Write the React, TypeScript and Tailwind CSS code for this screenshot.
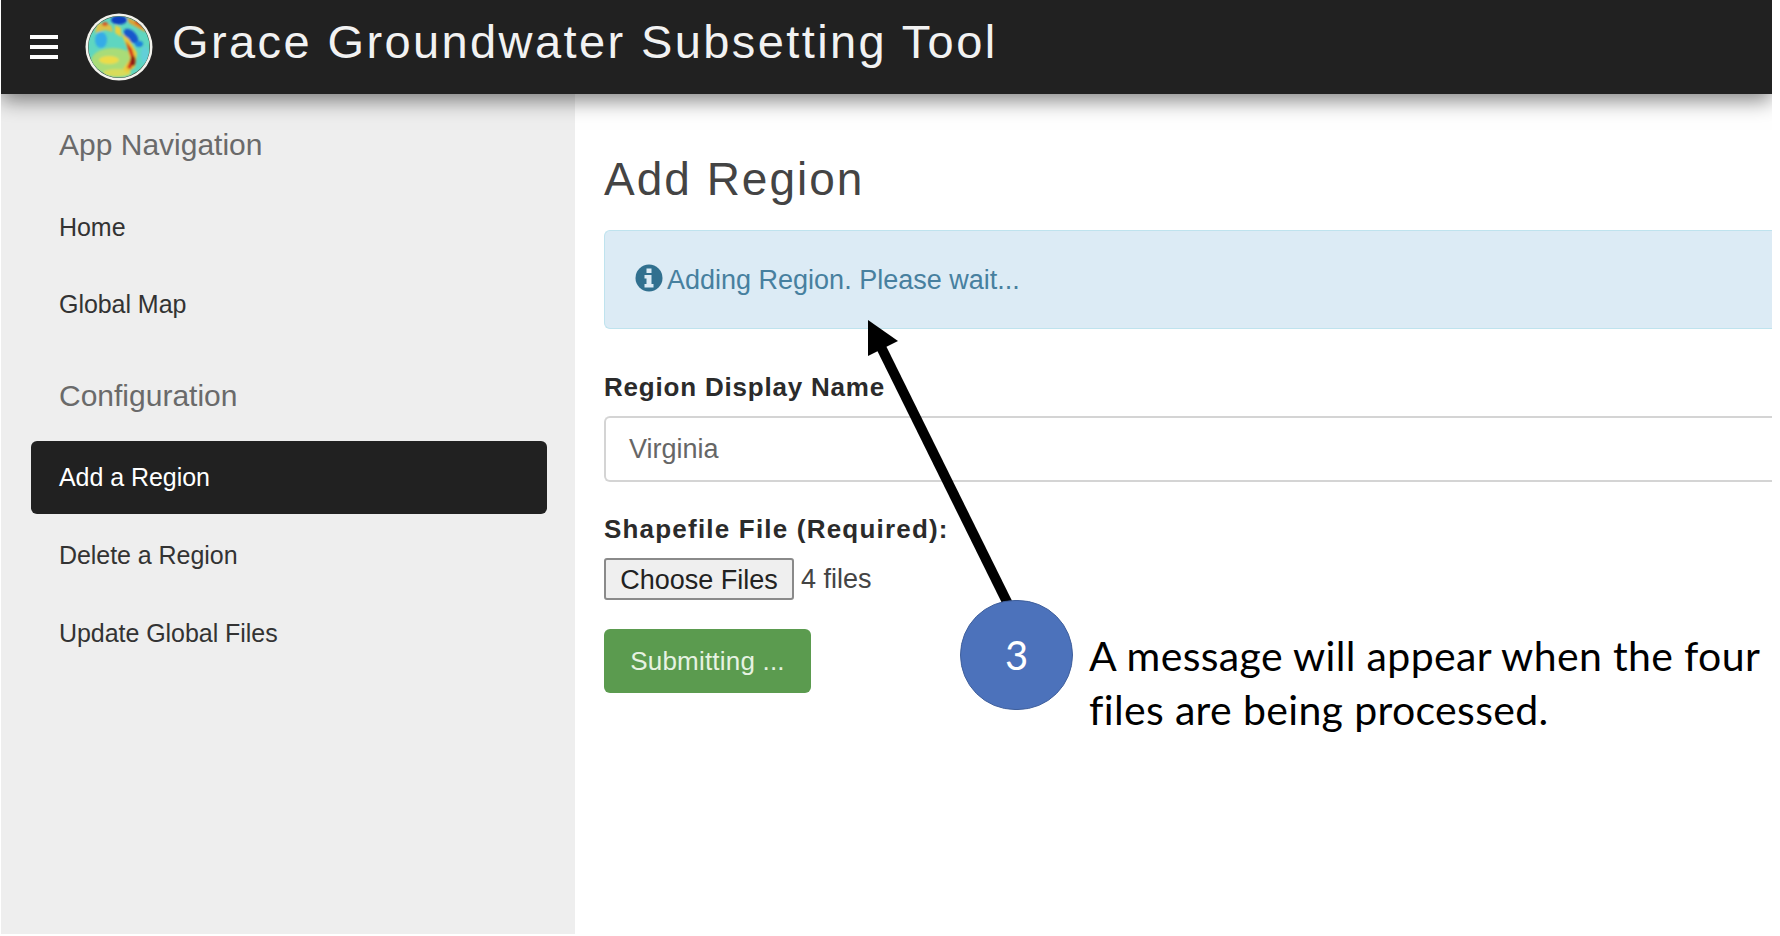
const navLink = "block px-[28px] text-[25px] leading-[36px] text-[#333] tracking-[-0.05px]"
const sectionTitle = "px-[28px] text-[30px] leading-[40px] text-[#6a6a6a]"

function Globe() {
  return (
    <svg viewBox="0 0 68 68" className="w-[68px] h-[68px] shrink-0">
      <defs>
        <clipPath id="earth">
          <circle cx="34" cy="34" r="30.5" />
        </clipPath>
        <filter id="soft">
          <feGaussianBlur stdDeviation="1" />
        </filter>
      </defs>
      <circle cx="34" cy="34" r="33.5" fill="#f2f2ec" />
      <circle cx="34" cy="34" r="31" fill="#3a4a3a" />
      <circle cx="34" cy="34" r="30.5" fill="#5fd6c0" />
      <g clipPath="url(#earth)">
        <g filter="url(#soft)">
          <ellipse cx="28" cy="48" rx="22" ry="13" fill="#a9dc78" />
          <ellipse cx="24" cy="47" rx="10" ry="4" fill="#ecdc4a" />
          <ellipse cx="32" cy="60" rx="14" ry="4" fill="#d8dc5a" />
          <ellipse cx="16" cy="27" rx="6" ry="8" fill="#35ace8" />
          <ellipse cx="34" cy="7" rx="8" ry="4.5" fill="#1040c0" />
          <ellipse cx="46" cy="23" rx="9" ry="5" transform="rotate(45 46 23)" fill="#1558cc" />
          <ellipse cx="54" cy="31" rx="4" ry="3" fill="#1a80e0" />
          <path d="M12 10 L26 12 L28 19 L20 17 L10 20 Z" fill="#dcc24a" />
          <path d="M42 4 L62 14 L60 19 L44 10 Z" fill="#e0a030" />
          <path d="M30 12 L36 15 L36 24 L30 20 Z" fill="#e8d040" />
          <path d="M36 20 L44 26 L52 40 L50 54 L42 60 L38 56 L45 46 L42 34 Z" fill="#eccb3a" />
          <path d="M41 28 L47 36 L50 46 L46 56 L42 55 L46 45 L43 36 Z" fill="#d2321e" />
          <ellipse cx="48" cy="48" rx="2.5" ry="5" fill="#8a1a14" />
          <path d="M50 6 L60 12 L58 15 L50 10 Z" fill="#cf4a22" />
          <ellipse cx="20" cy="11" rx="3" ry="2" fill="#d65a28" />
          <ellipse cx="60" cy="42" rx="4" ry="9" fill="#62cfd8" />
        </g>
      </g>
    </svg>
  )
}

function InfoIcon() {
  return (
    <svg viewBox="0 0 28 28" className="w-[28px] h-[28px] shrink-0 -mt-[3px]">
      <circle cx="14" cy="14" r="13.5" fill="#31708f" />
      <rect x="11.5" y="4.5" width="5" height="4.5" fill="#dcebf5" />
      <path d="M9.5 11h7v9h2v3.5h-9V20h2v-5.5h-2z" fill="#dcebf5" />
    </svg>
  )
}

export default function App() {
  return (
    <div className="relative w-[1780px] h-[936px] bg-white overflow-hidden font-['Liberation_Sans',Arial,sans-serif]">
      <div className="ml-[1px] w-[1771px] h-[934px] flex flex-col overflow-hidden">
        <header className="relative z-10 h-[94px] shrink-0 bg-[#212121] flex items-center pl-[29px] shadow-[0_6px_20px_rgba(0,0,0,0.5)]">
          <div className="flex flex-col gap-[6px] w-[28px]">
            <span className="h-[4px] bg-white" />
            <span className="h-[4px] bg-white" />
            <span className="h-[4px] bg-white" />
          </div>
          <div className="ml-[27px] mr-[19px]">
            <Globe />
          </div>
          <h1 className="-mt-[10px] text-[47px] leading-[56px] text-[#f2f2f2] tracking-[2.4px]">
            Grace Groundwater Subsetting Tool
          </h1>
        </header>

        <div className="flex flex-1 min-h-0">
          <aside className="w-[574px] shrink-0 bg-[#eeeeee] pl-[30px] pr-[28px] pt-[31px]">
            <div className={sectionTitle}>App Navigation</div>
            <nav className="mt-[44px] flex flex-col gap-[41px]">
              <a className={navLink}>Home</a>
              <a className={navLink}>Global Map</a>
            </nav>
            <div className={`${sectionTitle} mt-[54px]`}>Configuration</div>
            <nav className="mt-[25px] flex flex-col">
              <a className="flex items-center h-[73px] px-[28px] rounded-[6px] bg-[#212121] text-white text-[25px] tracking-[-0.05px]">
                Add a Region
              </a>
              <a className={`${navLink} mt-[23px]`}>Delete a Region</a>
              <a className={`${navLink} mt-[42px]`}>Update Global Files</a>
            </nav>
          </aside>

          <main className="flex-1 min-w-0 pl-[29px] pt-[57px]">
            <h2 className="text-[46px] leading-[56px] text-[#444] tracking-[2px]">Add Region</h2>
            <div className="mt-[23px] h-[99px] flex items-center gap-[4px] pl-[30px] rounded-l-[6px] bg-[#dcebf5] border border-r-0 border-[#bfe3ee] text-[#47809f] text-[27px]">
              <InfoIcon />
              <span className="mt-[1px]">Adding Region. Please wait...</span>
            </div>
            <label className="block mt-[41px] text-[26px] leading-[34px] font-bold text-[#2b2b2b] tracking-[0.8px]">
              Region Display Name
            </label>
            <div className="mt-[12px] h-[66px] flex items-center pl-[23px] rounded-l-[6px] bg-white border-2 border-r-0 border-[#d4d4d4] text-[27px] text-[#666]">
              Virginia
            </div>
            <label className="block mt-[30px] text-[26px] leading-[34px] font-bold text-[#2b2b2b] tracking-[1.2px]">
              Shapefile File (Required):
            </label>
            <div className="mt-[12px] flex items-center gap-[7px]">
              <button className="w-[190px] h-[42px] rounded-[3px] bg-[#efefef] border-2 border-[#8a8a8a] text-[27px] text-[#222]">
                Choose Files
              </button>
              <span className="text-[27px] text-[#444]">4 files</span>
            </div>
            <button className="block mt-[29px] w-[207px] h-[64px] rounded-[6px] bg-[#5b9b4f] text-[26px] text-[#e6f2e2] tracking-[0.2px]">
              Submitting ...
            </button>
          </main>
        </div>
      </div>

      {/* callout sits on top of the form */}
      <svg viewBox="0 0 1780 936" className="absolute inset-0 w-[1780px] h-[936px] pointer-events-none">
        <line x1="1008" y1="604" x2="880" y2="345" stroke="#000" strokeWidth="10" />
        <polygon points="868,320 898,341 868,356" fill="#000" />
      </svg>
      <div className="absolute left-[960px] top-[600px] w-[113px] h-[110px] rounded-full bg-[#4c72bb] border border-[#3f5f9c] flex items-center justify-center text-white text-[40px] font-['Lato',sans-serif]">
        3
      </div>
      <p className="absolute left-[1089px] top-[629px] w-[690px] text-[41px] leading-[54px] tracking-[0.35px] text-black font-['Lato',sans-serif]">
        A message will appear when the four files are being processed.
      </p>
    </div>
  )
}
